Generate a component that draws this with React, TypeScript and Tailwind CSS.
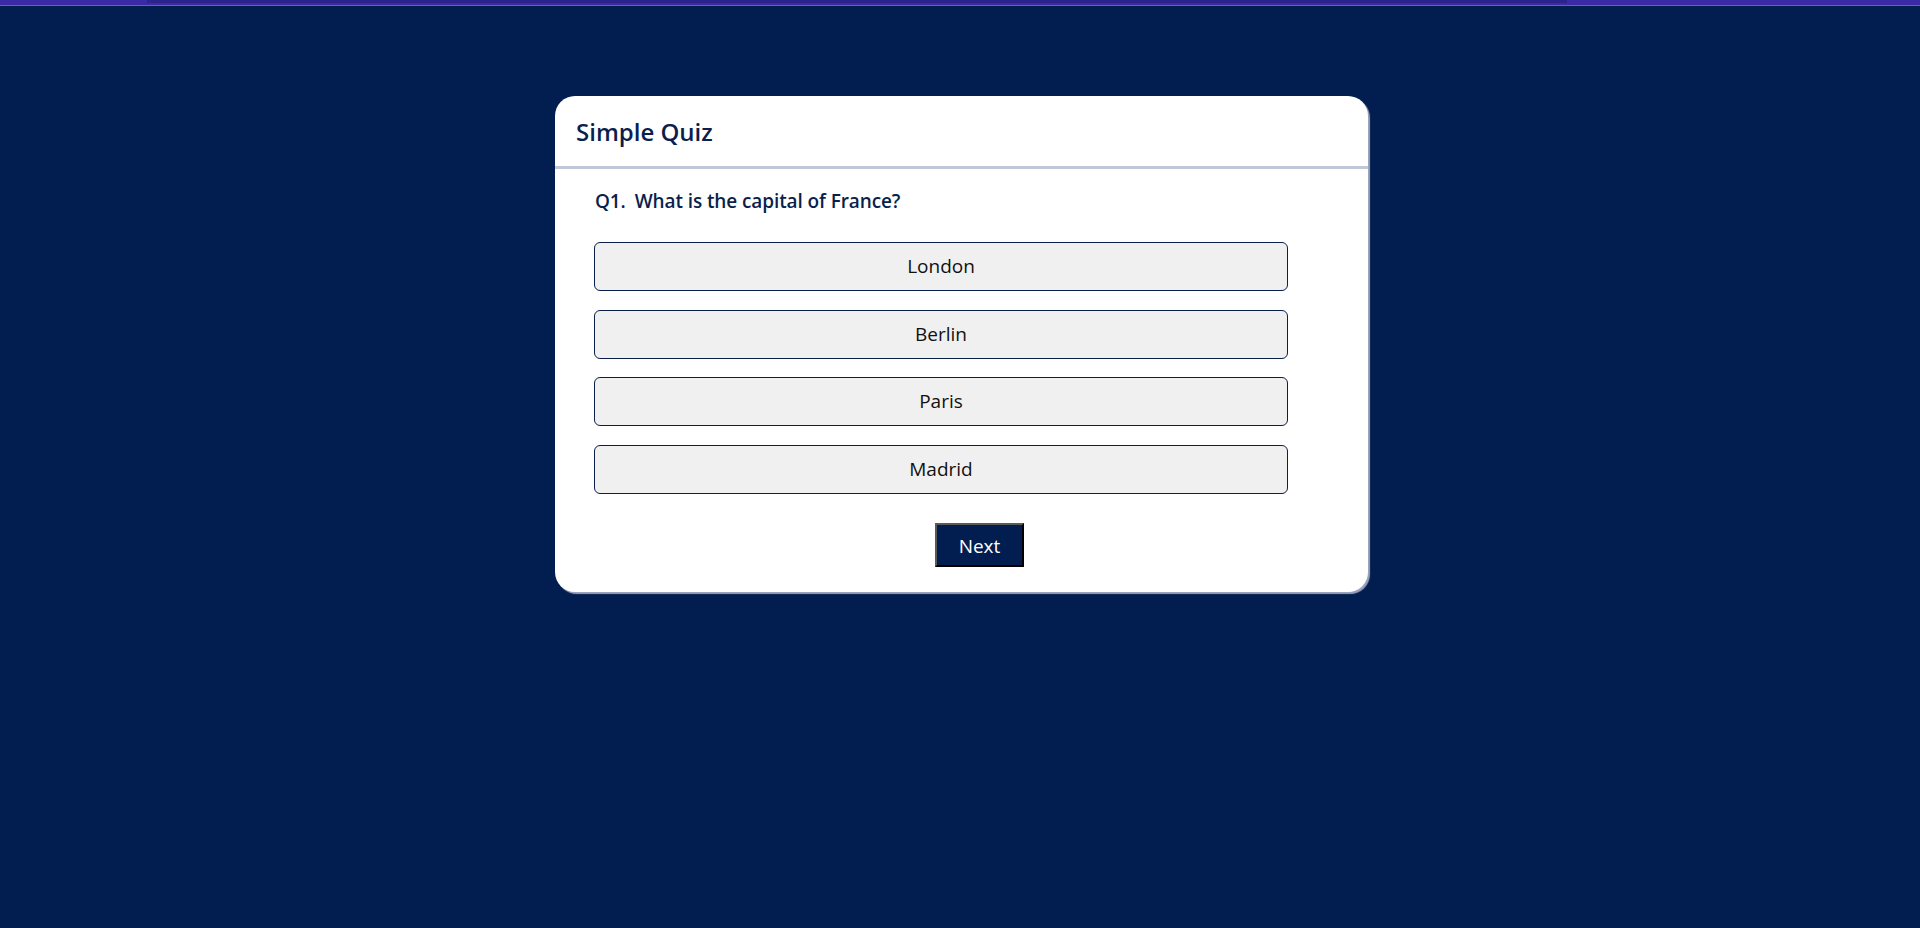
const OPTIONS = ['London', 'Berlin', 'Paris', 'Madrid'];

export default function App() {
  return (
    <div className="min-h-screen bg-[#021d4f] font-['Open_Sans',sans-serif]">
      {/* browser-ish top strip */}
      <div className="h-[6px] bg-[#3a2aa6] border-b border-[#6a5cd0] px-[147px]">
        <div className="h-[3px] w-[1420px] bg-[#2c238c]" />
      </div>

      <div className="pt-[90px] pl-[555px]">
        <div className="w-[813px] bg-white rounded-[20px] shadow-[2px_2px_1px_rgba(170,180,200,0.9)]">
          {/* Header */}
          <div className="h-[73px] flex items-center px-[21px] border-b-[3px] border-[#c0c8d6]">
            <h1 className="text-[24px] font-semibold text-[#0b1f4d] leading-none pt-[1px]">Simple Quiz</h1>
          </div>

          {/* Body */}
          <div className="pl-[39px] pt-[19px] pb-[25px]">
            <p className="text-[19px] font-semibold text-[#0b1f4d] leading-[26px] pl-[1px] tracking-[-0.1px]">
              <span className="mr-[9px]">Q1.</span>What is the capital of France?
            </p>

            <div className="mt-[28px] flex flex-col gap-[18.5px]">
              {OPTIONS.map((opt) => (
                <button
                  key={opt}
                  className="w-[694px] h-[49px] bg-[#f0f0f0] border border-[#0b1f4d] rounded-[6px] text-[19px] text-[#111111] text-center"
                >
                  {opt}
                </button>
              ))}
            </div>

            <div className="mt-[29.5px] pl-[341px]">
              <button className="w-[89px] h-[44px] pt-[2px] bg-[#021d4f] text-white text-[19px] border-2 border-t-[#5a5a5a] border-l-[#5a5a5a] border-r-black border-b-black">
                Next
              </button>
            </div>
          </div>
        </div>
      </div>
    </div>
  );
}
